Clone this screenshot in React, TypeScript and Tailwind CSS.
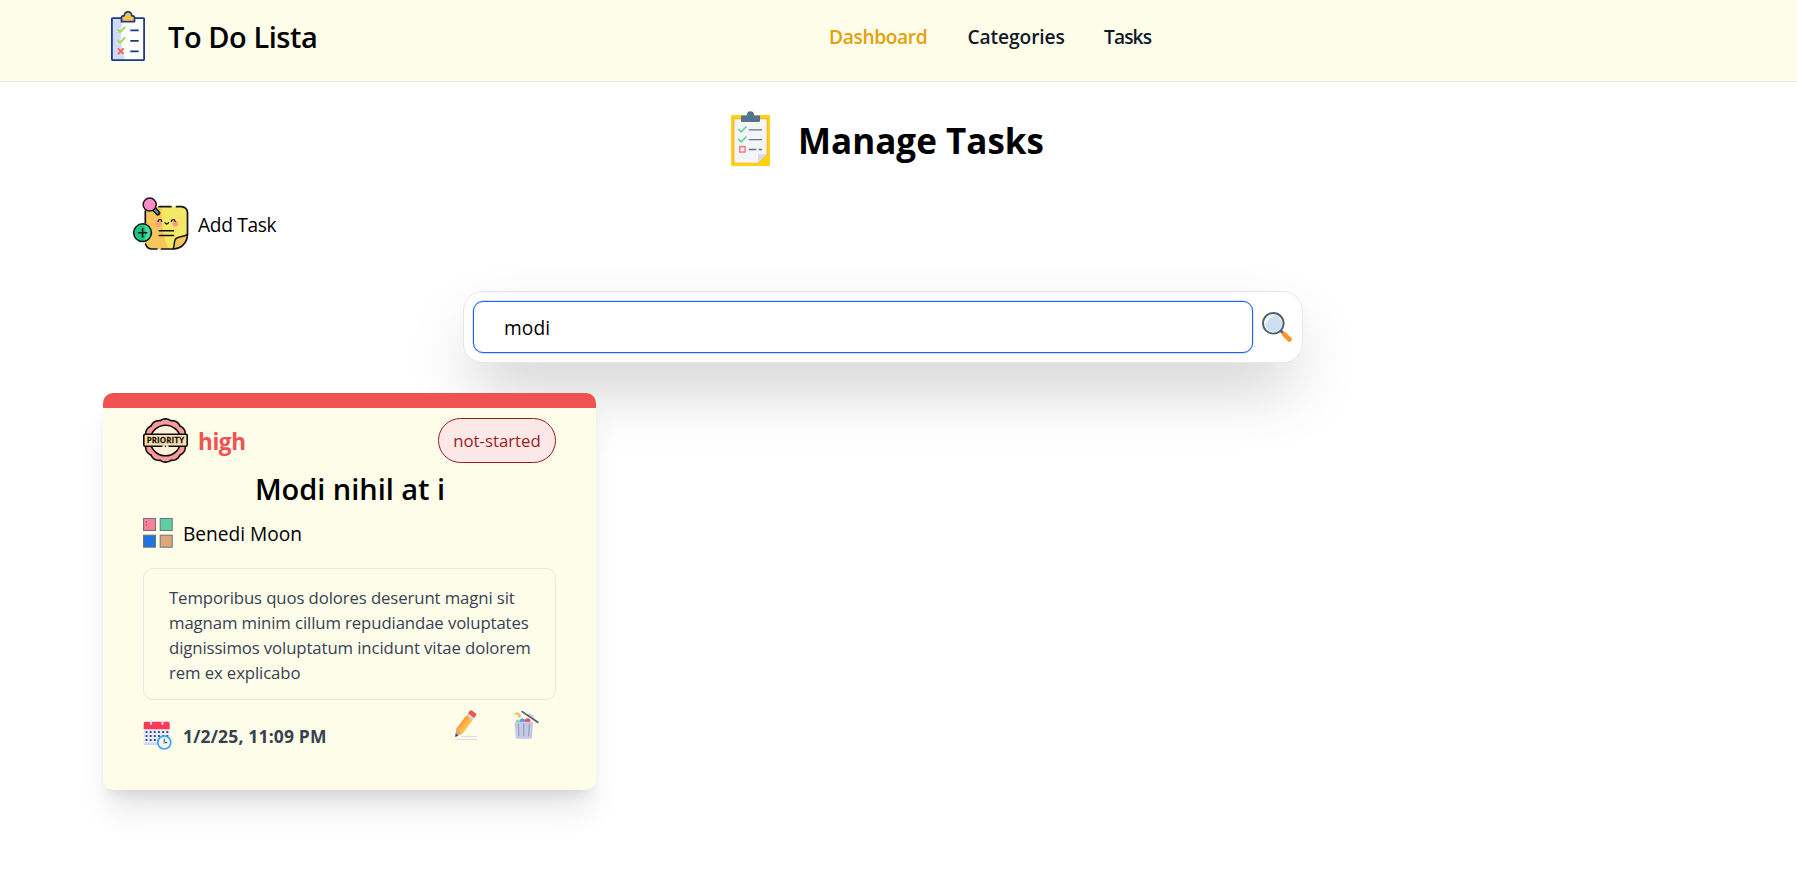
import React from "react";

function LogoIcon() {
  return (
    <svg width="34" height="50" viewBox="0 0 34 50" fill="none">
      <rect x="0.9" y="7.2" width="32.2" height="41.9" fill="#fff" />
      <path d="M1 7.2H13C8 18 9 38 14.500 49H1Z" fill="#d0daf9" />
      <rect x="0.9" y="7.2" width="32.2" height="41.9" rx="0.6" stroke="#1b3c82" strokeWidth="1.8" />
      <path d="M10.500 10.700V6.500C10.500 5.400 11.200 4.800 12.200 4.800H13.200C13.500 2.500 15 .9 17 .9s3.500 1.600 3.800 3.900h1c1 0 1.700.6 1.700 1.700v4.200Z" fill="#fbc54b" stroke="#1b3c82" strokeWidth="1.700" strokeLinejoin="round" />
      <path d="M6.700 18.700 9.200 21.200 14.200 15.800M6.700 29.200 9.200 31.700 14.200 26.300" stroke="#a5d84c" strokeWidth="1.900" />
      <path d="m6.900 37.400 5.800 5.800m0-5.800-5.800 5.800" stroke="#ff6152" strokeWidth="1.900" />
      <path d="M19.300 19.400h8.400M19.300 29.800h8.400M19.300 40.300h8.400" stroke="#1b3c82" strokeWidth="1.700" />
    </svg>
  );
}

function ManageIcon() {
  return (
    <svg width="39" height="55" viewBox="0 0 39 55" fill="none">
      <rect y="4" width="39" height="51" rx="1" fill="#ffd30d" />
      <path d="M2.300 7.200H36.700V43.300L28 52.300H2.300Z" fill="#ffae35" />
      <path d="M3.400 8.200H35.700V43.300L27 51.700H3.400Z" fill="#f4f5f6" />
      <path d="M27 51.700V43.300H35.700Z" fill="#d8dce2" />
      <circle cx="19.500" cy="3.900" r="3.600" fill="#52758f" />
      <path d="M10 4.500H29V10a1 1 0 0 1-1 1H11a1 1 0 0 1-1-1Z" fill="#52758f" />
      <path d="m7.300 18 2.900 2.900 5.300-5.400M7.300 28 10.200 30.900l5.300-5.400" stroke="#5dd09b" strokeWidth="1.500" />
      <path d="M17.700 18.800H31M17.700 28.600H31M17.700 38.500H25.300M27.700 38.500H31" stroke="#58798f" strokeWidth="1.300" />
      <rect x="8.700" y="35.700" width="5.300" height="5.300" fill="#fff" stroke="#ff7480" strokeWidth="1.500" />
    </svg>
  );
}

function AddTaskIcon() {
  return (
    <svg width="56" height="54" viewBox="0 0 56 54" fill="none" strokeLinecap="round">
      <path d="M18 9.700H48.500a6 6 0 0 1 6 6V38C54 46 48 52 40 52H18a6 6 0 0 1-6-6V15.700a6 6 0 0 1 6-6Z" fill="#f4e866" />
      <path d="M18 9.700H29C28 25 30 42 36 52H18a6 6 0 0 1-6-6V15.700a6 6 0 0 1 6-6Z" fill="#f6c65b" />
      <path d="M40 52C41.500 49 41 46 42 43C43 39.500 49 40.500 54.500 37.500C54.300 46 48 52 40 52Z" fill="#f6c65b" />
      <path d="M26 9.700H38M43.500 9.700H48.500a6 6 0 0 1 6 6V37.500C54.300 46 48 52 40 52H28.500M24 52H19c-4 0-5.500-2-6.500-5M12.300 26V14" stroke="#141418" strokeWidth="1.700" />
      <path d="M40 52C41.500 49 41 46 42 43C43 39.500 49 40.500 54.500 37.500" stroke="#141418" strokeWidth="1.500" />
      <path d="m21.500 12.500 3.400 3.500" stroke="#141418" strokeWidth="5" />
      <path d="m21.500 12.500 3.200 3.300" stroke="#7690a4" strokeWidth="2" />
      <circle cx="16.700" cy="7.600" r="6.500" fill="#ff8cc8" stroke="#141418" strokeWidth="1.500" />
      <circle cx="9.600" cy="35.700" r="8.900" fill="#16c784" stroke="#141418" strokeWidth="1.500" />
      <path d="M11 28a8 8 0 0 1 0 15.400C14 38 14 33 11 28Z" fill="#4cdaa5" />
      <path d="M5.500 35.700H13.800M9.600 31.500V39.900" stroke="#141418" strokeWidth="1.600" />
      <circle cx="25.500" cy="26.800" r="3" fill="#fd9b8b" />
      <circle cx="42.300" cy="26.800" r="3" fill="#fd9b8b" />
      <path d="M25 24.300c.5-2.200 3.400-2.200 3.900 0M38.300 24.300c.5-2.200 3.400-2.200 3.900 0M32 25.700c.4 1.700 3.100 1.700 3.500 0" stroke="#141418" strokeWidth="1.300" />
      <path d="M26.200 33.700H40.600M26.200 38.500H40.600" stroke="#141418" strokeWidth="1.500" />
    </svg>
  );
}

function SearchIcon() {
  return (
    <svg width="30" height="30" viewBox="0 0 30 30" fill="none">
      <path d="m18 18 4 4" stroke="#506073" strokeWidth="2.600" />
      <path d="m22.200 22.200 5.200 5.200" stroke="#ff922b" strokeWidth="4.800" strokeLinecap="round" />
      <circle cx="11.300" cy="11.300" r="10.300" fill="#f2f7fc" stroke="#506073" strokeWidth="1.900" />
      <circle cx="11.800" cy="11.800" r="8.200" fill="#cde0f1" />
      <path d="M4.800 10C5.500 7 7.500 5.200 10 4.700" stroke="#f5faff" strokeWidth="1.500" strokeLinecap="round" />
    </svg>
  );
}

const scallops = Array.from({ length: 121 }, (_, i) => {
  const a = (i / 120) * Math.PI * 2 - Math.PI / 2;
  const r = 20.500 + 0.9 * Math.abs(Math.cos(a * 6)) * 1.300;
  return `${(22.500 + r * Math.cos(a)).toFixed(2)},${(22.500 + r * Math.sin(a)).toFixed(2)}`;
}).join(" ");

function PriorityIcon() {
  return (
    <svg width="45" height="45" viewBox="0 0 45 45" fill="none">
      <polygon points={scallops} fill="#fb9b9b" stroke="#0d0d0d" strokeWidth="1.600" strokeLinejoin="round" />
      <circle cx="22.500" cy="22.500" r="15.300" fill="#fff0d9" stroke="#0d0d0d" strokeWidth="1.600" />
      <rect x="0.800" y="16.300" width="43.400" height="12" rx="1.200" fill="#fbdfa9" stroke="#0d0d0d" strokeWidth="1.600" />
      <path d="M19.500 28.400h6" stroke="#fff0d9" strokeWidth="2.200" />
      <circle cx="22.500" cy="28.500" r="0.700" fill="#0d0d0d" />
      <text x="3.900" y="24.900" textLength="37.200" lengthAdjust="spacing" fill="#0d0d0d" stroke="#0d0d0d" strokeWidth="0.300" fontFamily="Lato, sans-serif" fontWeight="900" fontSize="7.200">
        PRIORITY
      </text>
    </svg>
  );
}

function CategoryIcon() {
  return (
    <svg width="30" height="30" viewBox="0 0 30 30" stroke="#6d7285" strokeWidth="1">
      <rect x="0.500" y="0.500" width="12" height="12" fill="#fd7f97" />
      <rect x="17.200" y="0.500" width="12" height="12" fill="#5dcfa2" />
      <rect x="0.500" y="17.200" width="12" height="12" fill="#2174dc" />
      <rect x="17.200" y="17.200" width="12" height="12" fill="#dba978" />
      <path d="M3.200 3v6" strokeDasharray="2 1.200" />
    </svg>
  );
}

function CalendarIcon() {
  return (
    <svg width="30" height="30" viewBox="0 0 30 30" fill="none">
      <rect x="0.700" y="4" width="26" height="21" rx="1.600" fill="#e6ecfb" />
      <path d="M.7 22.800H26.700V23.500a1.500 1.500 0 0 1-1.500 1.500H2.200a1.500 1.500 0 0 1-1.500-1.500Z" fill="#cdd8f3" />
      <path d="M.7 9.300V3.200A1.500 1.500 0 0 1 2.200 1.700h23a1.500 1.500 0 0 1 1.500 1.500v6.100Z" fill="#ff3b54" />
      <path d="M8 1v3M19.500 1v3" stroke="#d9e2f7" strokeWidth="2" strokeLinecap="round" />
      <path d="M2.500 12H26M2.500 16H26M2.500 20H26" stroke="#41538c" strokeWidth="2" strokeDasharray="2 2.150" />
      <circle cx="21.300" cy="22.500" r="6.500" fill="#eef5ff" stroke="#3ea2f6" strokeWidth="1.700" />
      <path d="M21.300 18.800v3.800h2.900" stroke="#43548c" strokeWidth="1.100" />
      <circle cx="20.800" cy="22.900" r="1.100" fill="#fbc54b" />
    </svg>
  );
}

function PencilIcon() {
  return (
    <svg width="22" height="30" viewBox="0 0 22 30" fill="none">
      <path d="M6.500 26.600H21.500M.5 29.400H21.500" stroke="#d6dbe6" strokeWidth="1" strokeLinecap="round" />
      <path d="M.2 26.900 1.300 18.600 7.800 23.200Z" fill="#dba878" />
      <path d="M.2 26.900.7 23.300 3.500 25.400Z" fill="#3e4b5e" />
      <path d="M1.300 18.600 11.400 5.300 14.500 7.600 4.500 21Z" fill="#ff9b3f" />
      <path d="M4.300 21.300 14.300 7.600 17.700 10.100 7.800 23.200Z" fill="#fdc048" />
      <path d="M3 19.500 13 6.300 15 7.800 5 21.200Z" fill="#ffa94a" />
      <path d="M11.400 5.300 12.900 3.300 19.200 8.100 17.700 10.100Z" fill="#ccd6e2" />
      <path d="m12.900 3.300 1.800-2.400c.6-.8 1.500-.9 2.200-.4l3.700 2.800c.7.500.8 1.500.3 2.200l-1.700 2.600Z" fill="#f4554a" />
    </svg>
  );
}

function TrashIcon() {
  return (
    <svg width="25" height="30" viewBox="0 -0.700 25 30" fill="none">
      <circle cx="4" cy="10.700" r="2" fill="#7fdc7a" />
      <circle cx="8.400" cy="10.300" r="2.600" fill="#46a4f7" />
      <circle cx="13.700" cy="10.300" r="2.800" fill="#f9475f" />
      <path d="M.6 11H19.100L18.100 26.700A1.400 1.400 0 0 1 16.700 28H3.100A1.400 1.400 0 0 1 1.700 26.700Z" fill="#c5cae6" />
      <path d="m4.300 13.500.6 11.500M9.800 13.500V25M15.300 13.500 14.700 25" stroke="#949dc0" strokeWidth="1.200" strokeLinecap="round" />
      <path d="M13.500 3.500C16 2 20 4.300 20.300 8Z" fill="#c5cae6" />
      <path d="m8.200.9 15.600 10.700" stroke="#4d5c72" strokeWidth="1.700" strokeLinecap="round" />
      <path d="M.6 3.300C3 1.800 5 3 5.700 5.400" stroke="#fdb052" strokeWidth="1.800" />
      <path d="M3 5.500 6.200 6.900 7.400 3.700Z" fill="#fdb052" />
    </svg>
  );
}

function Header() {
  return (
    <header className="h-[82px] border-b border-gray-200 bg-[#fdfdea] pb-[9px]">
      <div className="flex h-[72px] items-center pl-[111px]">
        <LogoIcon />
        <span className="ml-[23px] w-[661px] whitespace-nowrap pt-[2px] text-[29px] font-semibold leading-9 tracking-[-0.45px] text-black">
          To Do Lista
        </span>
        <nav className="flex whitespace-nowrap pt-[2px] text-[19.2px] font-semibold leading-7 text-[#111928]">
          <a className="w-[138.5px] tracking-[-0.38px] text-[#e3a008]">Dashboard</a>
          <a className="w-[136.5px] tracking-[-0.1px]">Categories</a>
          <a className="tracking-[-0.9px]">Tasks</a>
        </nav>
      </div>
    </header>
  );
}

function TaskCard() {
  return (
    <article className="h-[397px] rounded-[10px] border-t-[15px] border-[#f05252] bg-[#fdfdea] px-10 pt-[10px] shadow-[0_25px_31.25px_-6.25px_rgba(0,0,0,0.1),0_10px_12.5px_-7.5px_rgba(0,0,0,0.1)]">
      <div className="flex h-[45px] items-center justify-between">
        <div className="flex items-center">
          <PriorityIcon />
          <span className="ml-[10px] pt-[2px] text-[22.5px] font-bold leading-8 tracking-[-0.4px] text-[#f05252]">high</span>
        </div>
        <span className="flex h-[45px] w-[118px] items-center justify-center rounded-full border border-[#9b1c1c] bg-[#fde8e8] pt-px text-[16.75px] text-[#9b1c1c]">
          not-started
        </span>
      </div>
      <h2 className="mt-2 h-9 pl-px text-center text-[29px] font-semibold leading-9 tracking-[-0.03px] text-black">Modi nihil at i</h2>
      <div className="mt-[11px] flex h-[30px] items-center">
        <CategoryIcon />
        <span className="ml-[10px] pt-[2px] text-[19.15px] leading-[30px] text-black">Benedi Moon</span>
      </div>
      <p className="mt-5 h-[132px] rounded-[10px] border border-gray-200 pl-[25px] pr-5 pt-4 text-[16.75px] leading-[25px] tracking-[-0.11px] text-[#374151]">
        Temporibus quos dolores deserunt magni sit magnam minim cillum repudiandae voluptates dignissimos voluptatum
        incidunt vitae dolorem rem ex explicabo
      </p>
      <div className="mt-[10px] flex items-start justify-between">
        <div className="flex h-10 items-center pt-[10px]">
          <CalendarIcon />
          <time className="ml-[10px] pt-[2px] text-[17.5px] font-bold leading-[30px] tracking-[0.16px] text-[#374151]">
            1/2/25, 11:09 PM
          </time>
        </div>
        <div className="flex gap-[37px] pr-[17px]">
          <PencilIcon />
          <TrashIcon />
        </div>
      </div>
    </article>
  );
}

export default function App() {
  return (
    <div className="min-h-screen bg-white font-['Open_Sans',sans-serif]">
      <Header />
      <main className="ml-[103px] w-[1561px] pt-[29px]">
        <div className="flex h-[55px] items-center pl-[628px]">
          <ManageIcon />
          <h1 className="ml-[28px] pt-[5px] text-[35px] font-bold leading-[44px] tracking-[0.02px] text-black">Manage Tasks</h1>
        </div>
        <button className="mt-[31px] flex h-[54px] items-center pl-[30px]">
          <AddTaskIcon />
          <span className="ml-[9px] pt-px text-[19.15px] leading-7 tracking-[-0.32px] text-black">Add Task</span>
        </button>
        <div className="ml-[360px] mt-[40px] flex h-[72px] w-[840px] items-center rounded-[20px] border border-gray-200 bg-white pl-[9px] shadow-[0_31px_66px_-13px_rgba(0,0,0,0.25)]">
          <input
            className="h-[52px] w-[780px] rounded-[10px] border border-[#1c64f2] bg-white px-[30px] pt-[2px] text-[19.15px] tracking-[0.1px] text-black outline-none ring-[0.4px] ring-[#1c64f2]/40"
            defaultValue="modi"
          />
          <div className="ml-[9px]">
            <SearchIcon />
          </div>
        </div>
        <section className="mt-[30px] grid grid-cols-3 gap-[41px]">
          <TaskCard />
        </section>
      </main>
    </div>
  );
}
